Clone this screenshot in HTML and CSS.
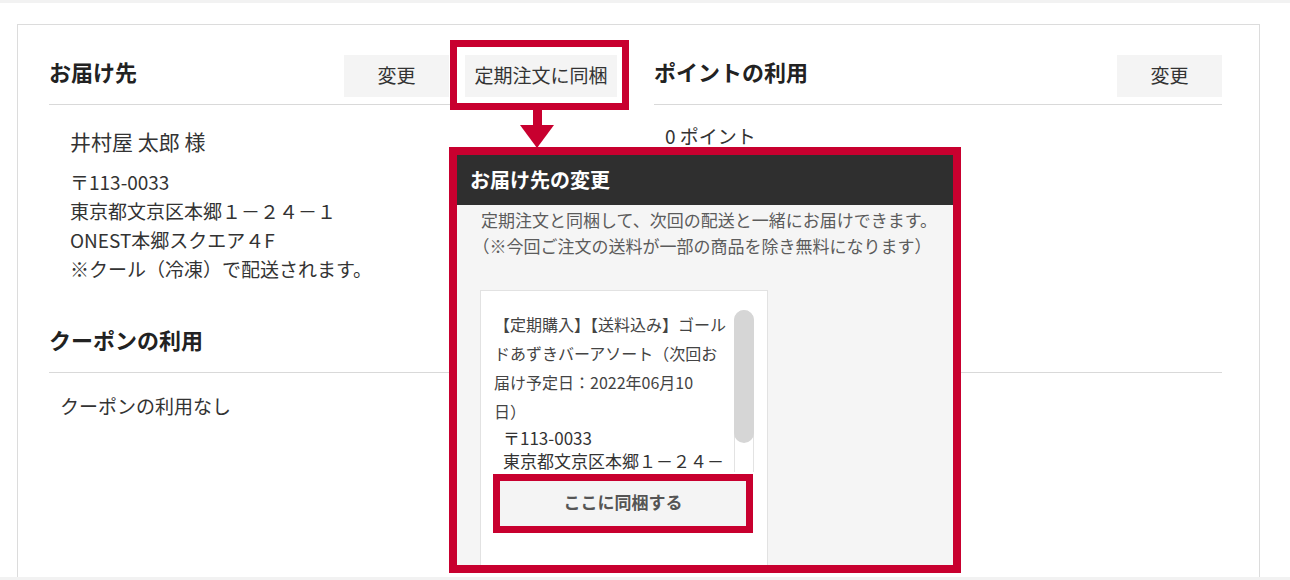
FILE: index.html
```html
<!DOCTYPE html>
<html lang="ja">
<head>
    <meta charset="UTF-8">
    <meta name="viewport" content="width=device-width, initial-scale=1.0">
    <title>お届け先の変更</title>
    <link rel="stylesheet" href="styles.css">
</head>
<body>
    <div class="page">
        <div class="card">
            <div class="columns">
                <section class="col">
                    <div class="sec-head">
                        <h2>お届け先</h2>
                        <div class="actions">
                            <button class="btn">変更</button>
                            <div class="mark">
                                <button class="btn btn-wide">定期注文に同梱</button>
                            </div>
                        </div>
                    </div>
                    <p class="name">井村屋 太郎 様</p>
                    <p class="address">〒113-0033<br>東京都文京区本郷１－２４－１<br>ONEST本郷スクエア４F<br>※クール（冷凍）で配送されます。</p>
                </section>

                <section class="col">
                    <div class="sec-head">
                        <h2>ポイントの利用</h2>
                        <button class="btn">変更</button>
                    </div>
                    <p class="points">0 ポイント</p>
                </section>
            </div>

            <section class="coupon">
                <div class="sec-head">
                    <h2>クーポンの利用</h2>
                </div>
                <p class="coupon-text">クーポンの利用なし</p>
            </section>

            <!-- annotation: arrow from the button to the dialog -->
            <div class="arrow"></div>

            <div class="modal">
                <div class="modal-head">お届け先の変更</div>
                <div class="modal-body">
                    <p class="modal-text">定期注文と同梱して、次回の配送と一緒にお届けできます。<br>（※今回ご注文の送料が一部の商品を除き無料になります）</p>

                    <div class="bundle-card">
                        <div class="scroll">
                            <div class="scroll-content">
                                <p class="title">【定期購入】【送料込み】ゴールドあずきバーアソート（次回お<br>届け予定日：2022年06月10<br>日）</p>
                                <p class="dest">〒113-0033<br>東京都文京区本郷１－２４－</p>
                            </div>
                            <div class="scrollbar">
                                <div class="thumb"></div>
                            </div>
                        </div>
                        <div class="mark-big">
                            <button class="bundle-btn">ここに同梱する</button>
                        </div>
                    </div>
                </div>
            </div>
        </div>
    </div>
</body>
</html>
```

FILE: styles.css
```css
body {
    margin: 0;
    background: #f2f2f2;
    font-family: "Noto Sans CJK JP", "Noto Sans", sans-serif;
    color: #333;
}
p {
    margin: 0;
}
.page {
    margin-top: 3px;
    height: 574px;
    background: #fff;
    overflow: hidden;
}
.card {
    position: relative;
    box-sizing: border-box;
    width: 1243px;
    height: 620px;
    margin: 21px 0 0 17px;
    padding: 30px 37px 0 31px;
    border: 1px solid #dcdcdc;
}
.columns {
    display: flex;
    gap: 37px;
}
.col {
    flex: 1;
}
.sec-head {
    display: flex;
    justify-content: space-between;
    align-items: flex-start;
    min-height: 42px;
    padding-bottom: 7px;
    border-bottom: 1px solid #d9d9d9;
}
.sec-head h2 {
    margin: 0;
    font-size: 22px;
    line-height: 32px;
    font-weight: 700;
    color: #222;
}
.actions {
    display: flex;
    gap: 16px;
}
.btn {
    width: 105px;
    height: 42px;
    padding: 0 0 3px;
    border: none;
    background: #f4f4f4;
    font-family: "Noto Sans CJK JP", sans-serif;
    font-size: 19px;
    color: #333;
}
.btn-wide {
    display: block;
    width: 152px;
}
.mark {
    padding: 8px 5px 6px 8px;
    margin: -15px -12px -13px -15px;
    border: 7px solid #c8002f;
    background: #fff;
}
.name {
    margin: 20px 0 0 21px;
    font-size: 21px;
    line-height: 32px;
}
.address {
    margin: 10px 0 0 21px;
    font-size: 19px;
    line-height: 29px;
}
.points {
    margin: 16px 0 0 11px;
    font-size: 19px;
    line-height: 29px;
}
.coupon {
    margin-top: 40px;
}
.coupon-text {
    margin: 18px 0 0 11px;
    font-size: 19px;
    line-height: 29px;
}

/* annotation overlay */
.arrow {
    position: absolute;
    left: 502px;
    top: 85px;
    width: 35px;
    height: 38px;
}
.arrow::before {
    content: "";
    position: absolute;
    left: 13px;
    top: 0;
    width: 9px;
    height: 16px;
    background: #c8002f;
}
.arrow::after {
    content: "";
    position: absolute;
    left: 0;
    top: 15px;
    border-left: 17.5px solid transparent;
    border-right: 17.5px solid transparent;
    border-top: 23px solid #c8002f;
}
.modal {
    position: absolute;
    left: 431px;
    top: 122px;
    box-sizing: border-box;
    width: 512px;
    height: 426px;
    border: 8px solid #c8002f;
    background: #f5f5f5;
    overflow: hidden;
}
.modal-head {
    height: 50px;
    padding-left: 13px;
    line-height: 50px;
    background: #2f2f2f;
    color: #fff;
    font-size: 20px;
    font-weight: 700;
}
.modal-body {
    padding: 2px 0 0 24px;
}
.modal-text {
    font-size: 17px;
    line-height: 26px;
    color: #5c5c5c;
    text-spacing-trim: trim-start;
}
.bundle-card {
    box-sizing: border-box;
    width: 288px;
    height: 320px;
    margin: 31px 0 0 -1px;
    padding: 12px 13px 0 12px;
    border: 1px solid #e2e2e2;
    background: #fff;
}
.scroll {
    display: flex;
    height: 169px;
    margin-left: 1px;
    overflow: hidden;
}
.scroll-content {
    width: 241px;
    padding-top: 7px;
}
.title {
    font-size: 16px;
    line-height: 29px;
    color: #444;
}
.dest {
    margin-left: 9px;
    font-size: 17px;
    line-height: 23px;
    color: #333;
}
.scrollbar {
    flex-shrink: 0;
    box-sizing: border-box;
    width: 20px;
    height: 200px;
    margin-top: 7px;
    border: 1px solid #e3e3e3;
    border-radius: 10px;
}
.thumb {
    height: 133px;
    margin: -1px;
    background: #d6d6d6;
    border-radius: 10px;
}
.mark-big {
    box-sizing: border-box;
    width: 260px;
    margin-top: 2px;
    border: 7px solid #c8002f;
}
.bundle-btn {
    display: block;
    width: 100%;
    height: 45px;
    padding: 0 0 4px;
    border: none;
    background: #f4f4f4;
    font-family: "Noto Sans CJK JP", sans-serif;
    font-size: 17px;
    font-weight: 700;
    color: #555;
}
```
